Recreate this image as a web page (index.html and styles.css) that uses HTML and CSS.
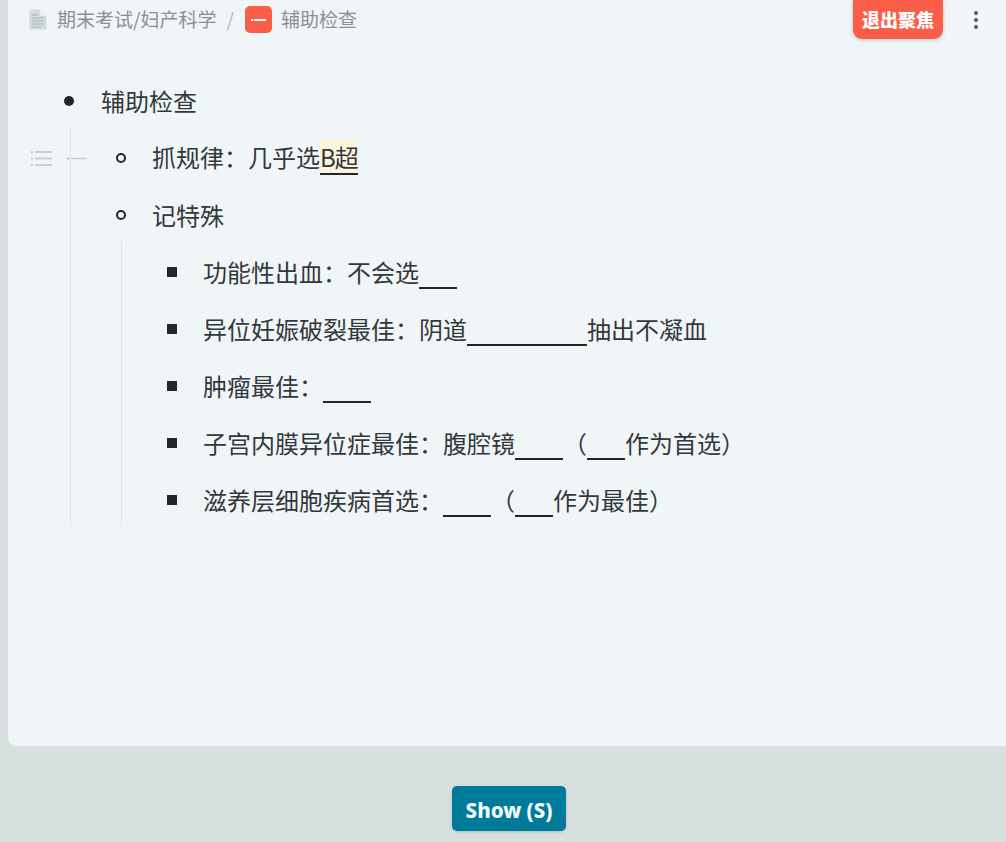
FILE: index.html
```html
<!DOCTYPE html>
<html lang="zh-CN">
<head>
    <meta charset="UTF-8">
    <meta name="viewport" content="width=device-width, initial-scale=1.0">
    <title>辅助检查</title>
    <link rel="stylesheet" href="styles.css">
</head>
<body>
    <div class="panel">
        <div class="topbar">
            <div class="breadcrumb">
                <svg class="doc-icon" width="18" height="21" viewBox="0 0 18 21">
                    <path d="M2 0.5H11L17.5 7V19a1.5 1.5 0 0 1-1.5 1.5H2A1.5 1.5 0 0 1 0.5 19V2A1.5 1.5 0 0 1 2 0.5Z" fill="#d3dadf"/>
                    <path d="M11 0.5V7H17.5Z" fill="#eef2f4"/>
                    <path d="M3 6H9M3 9H15M3 12H15M3 15H15M3 18H12" stroke="#aab4bb" stroke-width="1"/>
                </svg>
                <span class="crumb-text">期末考试/妇产科学</span>
                <span class="crumb-text crumb-sep">/</span>
                <span class="badge"><i class="badge-dot"></i><i class="badge-dash"></i></span>
                <span class="crumb-text">辅助检查</span>
            </div>
            <div class="actions">
                <button class="exit-btn">退出聚焦</button>
                <div class="kebab"><i></i><i></i><i></i></div>
            </div>
        </div>

        <ul class="outline">
            <li>
                <div class="row"><span class="marker disc"></span><span class="text">辅助检查</span></div>
                <ul class="outline-sub">
                    <li>
                        <div class="row">
                            <div class="row-tools">
                                <svg width="22" height="17" viewBox="0 0 22 17">
                                    <path d="M5 2H22M5 8.500H22M5 15H22" stroke="#c6d2d2" stroke-width="2"/>
                                    <path d="M1 2H3M1 8.500H3M1 15H3" stroke="#c6d2d2" stroke-width="2"/>
                                </svg>
                                <svg width="22" height="5" viewBox="0 0 22 5">
                                    <circle cx="2" cy="2.500" r="1.500" fill="#c6d2d2"/>
                                    <path d="M5 2.500H21" stroke="#c6d2d2" stroke-width="1.500"/>
                                </svg>
                            </div>
                            <span class="marker ring"></span>
                            <span class="text">抓规律：几乎选<span class="mark">B超</span></span>
                        </div>
                    </li>
                    <li>
                        <div class="row"><span class="marker ring"></span><span class="text">记特殊</span></div>
                        <ul class="outline-sub">
                            <li><div class="row"><span class="marker square"></span><span class="text">功能性出血：不会选<span class="blank short"></span></span></div></li>
                            <li><div class="row"><span class="marker square"></span><span class="text">异位妊娠破裂最佳：阴道<span class="blank long"></span>抽出不凝血</span></div></li>
                            <li><div class="row"><span class="marker square"></span><span class="text">肿瘤最佳：<span class="blank mid"></span></span></div></li>
                            <li><div class="row"><span class="marker square"></span><span class="text">子宫内膜异位症最佳：腹腔镜<span class="blank mid"></span>（<span class="blank short"></span>作为首选）</span></div></li>
                            <li><div class="row"><span class="marker square"></span><span class="text">滋养层细胞疾病首选：<span class="blank mid"></span>（<span class="blank short"></span>作为最佳）</span></div></li>
                        </ul>
                    </li>
                </ul>
            </li>
        </ul>
    </div>

    <div class="footer">
        <button class="show-btn">Show (S)</button>
    </div>
</body>
</html>
```

FILE: styles.css
```css
html, body {
    height: 100%;
}

body {
    margin: 0;
    overflow: hidden;
    background-color: #d7e0df;
    color: #33383c;
    font-family: "Noto Sans CJK SC", "Open Sans", sans-serif;
}

.panel {
    height: 746px;
    margin-left: 8px;
    background-color: #f0f5f7;
    border-bottom-left-radius: 8px;
    box-sizing: border-box;
}

.topbar {
    display: flex;
    justify-content: space-between;
    height: 39px;
    padding-left: 21px;
}

.breadcrumb {
    display: flex;
    align-items: center;
    height: 39px;
    font-size: 19px;
    color: #8b9094;
}

.crumb-text {
    margin-bottom: 2px;
}

.doc-icon {
    margin-right: 10px;
}

.crumb-sep {
    margin-left: 10px;
    margin-right: 11px;
    color: #b4babd;
}

.badge {
    position: relative;
    display: block;
    width: 27px;
    height: 27px;
    margin-right: 9px;
    background-color: #fb5e48;
    border-radius: 5px;
}

.badge-dot {
    position: absolute;
    left: 6px;
    top: 13px;
    width: 2px;
    height: 2px;
    background-color: #fff;
}

.badge-dash {
    position: absolute;
    left: 9px;
    top: 13px;
    width: 12px;
    height: 2px;
    background-color: #fff;
}

.actions {
    display: flex;
    align-items: flex-start;
}

.exit-btn {
    width: 90px;
    height: 39px;
    padding: 0 0 2px;
    border: none;
    border-radius: 0 0 9px 9px;
    background-color: #fb5e48;
    box-shadow: 0 1px 4px rgba(0, 0, 0, 0.2);
    color: #fff;
    font-family: inherit;
    font-size: 18px;
    font-weight: 900;
}

.kebab {
    display: flex;
    flex-direction: column;
    gap: 3px;
    margin: 11px 28px 0 31px;
}

.kebab i {
    width: 4px;
    height: 4px;
    background-color: #50565a;
    border-radius: 50%;
}

.outline,
.outline-sub {
    list-style: none;
    margin: 0;
    padding: 0;
}

.outline {
    margin-top: -1px;
    padding: 32px 0 0 42px;
    font-size: 24px;
}

.outline-sub {
    margin-left: 20px;
    padding-left: 30px;
    border-left: 1px solid #dfe5e7;
}

.outline li {
    padding-top: 7px;
}

.row {
    position: relative;
    display: flex;
    align-items: center;
    height: 50px;
    white-space: nowrap;
}

.text {
    padding-bottom: 4px;
}

.marker {
    flex: none;
    box-sizing: border-box;
    margin: 0 26px 3px 15px;
    width: 10px;
    height: 10px;
}

.disc {
    margin-left: 14px;
    margin-right: 27px;
    background-color: #22272b;
    border-radius: 50%;
}

.ring {
    border: 2px solid #22272b;
    border-radius: 50%;
}

.square {
    background-color: #22272b;
}

.row-tools {
    position: absolute;
    left: -71px;
    top: 16px;
    display: flex;
    align-items: center;
    gap: 14px;
}

.mark {
    display: inline-block;
    padding-top: 2px;
    letter-spacing: -1px;
    line-height: 32px;
    background-color: #fcf3dc;
    border-bottom: 2px solid #22272b;
}

.blank {
    display: inline-block;
    height: 2px;
    vertical-align: -7px;
    background-color: #22272b;
}

.blank.short {
    width: 38px;
}

.blank.mid {
    width: 48px;
}

.blank.long {
    width: 120px;
}

.footer {
    display: flex;
    justify-content: center;
    padding: 40px 0 0 12px;
}

.show-btn {
    width: 114px;
    height: 45px;
    padding: 2px 0 0;
    border: none;
    border-radius: 5px;
    background-color: #007a99;
    box-shadow: 0 1px 3px rgba(0, 0, 0, 0.15);
    color: #f2fafb;
    font-family: "Noto Sans", "Open Sans", sans-serif;
    font-size: 20.5px;
    font-weight: 800;
}
```
